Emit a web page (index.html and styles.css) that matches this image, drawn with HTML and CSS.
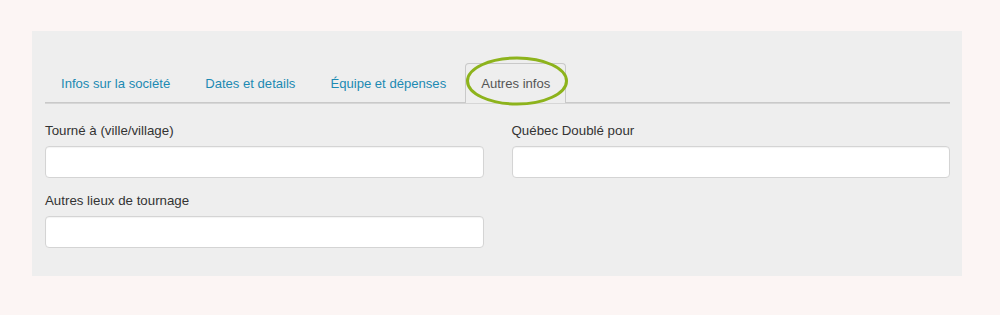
FILE: index.html
```html
<!DOCTYPE html>
<html lang="fr">
<head>
<meta charset="utf-8">
<title>Autres infos</title>
<link rel="stylesheet" href="styles.css">
</head>
<body>
<div class="panel">
  <ul class="tabs">
    <li class="tab"><a href="#">Infos sur la société</a></li>
    <li class="tab"><a href="#">Dates et details</a></li>
    <li class="tab"><a href="#">Équipe et dépenses</a></li>
    <li class="tab active">
      <a href="#">Autres infos</a>
      <svg class="ring" width="104" height="52" viewBox="0 0 104 52"><ellipse cx="52" cy="26" rx="49.5" ry="23" fill="none" stroke="#8db31c" stroke-width="3"/></svg>
    </li>
  </ul>
  <div class="form">
    <div class="field">
      <label>Tourné à (ville/village)</label>
      <input type="text">
    </div>
    <div class="field">
      <label>Québec Doublé pour</label>
      <input type="text">
    </div>
    <div class="field">
      <label>Autres lieux de tournage</label>
      <input type="text">
    </div>
  </div>
</div>
</body>
</html>
```

FILE: styles.css
```css
html, body {
  margin: 0;
  padding: 0;
  background: #fcf5f4;
}
body {
  font-family: "Liberation Sans", Arial, sans-serif;
  font-size: 13.3px;
  color: #333;
  padding: 31px 38px 0 32px;
}
.panel {
  background: #eeeeee;
  padding: 32px 12px 28px 13px;
  height: 245px;
  box-sizing: border-box;
}
.tabs {
  list-style: none;
  margin: 0;
  padding: 0;
  display: flex;
  gap: 3px;
  border-bottom: 1px solid #c9c9c9;
  box-shadow: 0 1px 0 #d6d6d6;
}
.tab {
  position: relative;
  margin-bottom: -1px;
  font-size: 13.1px;
}
.tab a {
  display: block;
  padding: 10px 15px 8px;
  line-height: 20px;
  color: #1c8ab3;
  text-decoration: none;
  border: 1px solid transparent;
  border-bottom: none;
  border-radius: 4px 4px 0 0;
}
.tab.active a {
  color: #555;
  background: #eeeeee;
  border-color: #c9c9c9;
  padding-bottom: 9px;
}
.ring {
  position: absolute;
  left: 0;
  top: -8px;
  pointer-events: none;
}
.form {
  display: grid;
  grid-template-columns: 1fr 1fr;
  column-gap: 28px;
  row-gap: 14px;
  margin-top: 19px;
}
.field label {
  display: block;
  line-height: 18px;
  margin-bottom: 6px;
}
.field input {
  display: block;
  width: 100%;
  box-sizing: border-box;
  height: 32px;
  border: 1px solid #d4d4d4;
  border-radius: 4px;
  background: #fff;
  box-shadow: inset 0 1px 1px rgba(0,0,0,0.05);
  margin: 0;
}
```
